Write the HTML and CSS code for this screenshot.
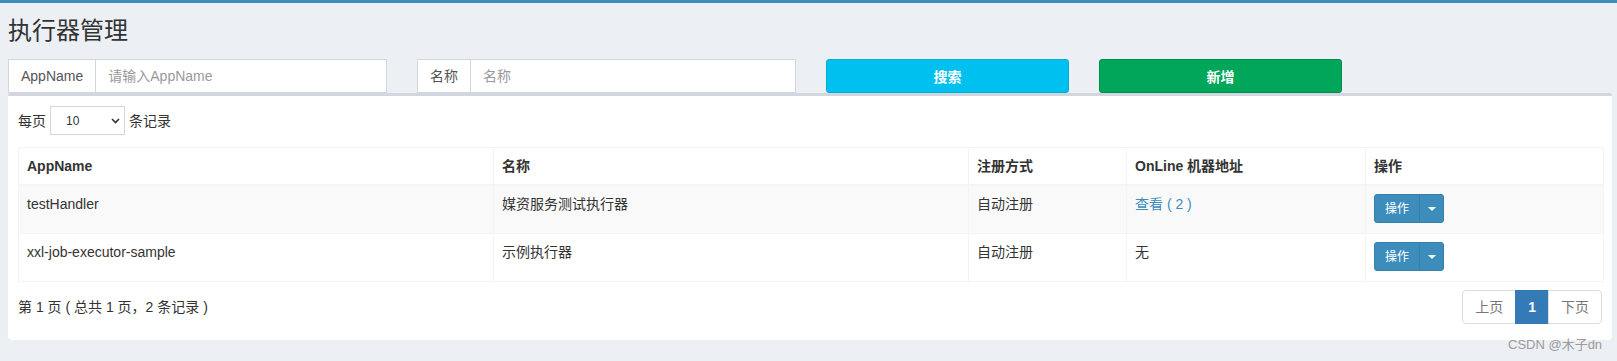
FILE: index.html
```html
<!DOCTYPE html>
<html lang="zh-CN">
<head>
<meta charset="utf-8">
<title>执行器管理</title>
<link rel="stylesheet" href="styles.css">
</head>
<body>
<div class="topbar"></div>
<section class="content">
  <h1 class="page-title">执行器管理</h1>
  <div class="filters">
    <div class="input-group">
      <span class="addon">AppName</span>
      <span class="field">请输入AppName</span>
    </div>
    <div class="input-group">
      <span class="addon">名称</span>
      <span class="field">名称</span>
    </div>
    <button class="btn btn-info">搜索</button>
    <button class="btn btn-success">新增</button>
  </div>
  <div class="box">
    <div class="length">
      <span>每页</span>
      <div class="select"><span>10</span>
        <svg width="9" height="6" viewBox="0 0 9 6"><path d="M1 1 L4.5 4.5 L8 1" fill="none" stroke="#333" stroke-width="1.6"/></svg>
      </div>
      <span>条记录</span>
    </div>
    <table class="table">
      <colgroup>
        <col class="c-app"><col class="c-name"><col class="c-type"><col class="c-online"><col class="c-op">
      </colgroup>
      <thead>
        <tr><th>AppName</th><th>名称</th><th>注册方式</th><th>OnLine 机器地址</th><th>操作</th></tr>
      </thead>
      <tbody>
        <tr>
          <td>testHandler</td><td>媒资服务测试执行器</td><td>自动注册</td>
          <td><a class="link">查看 ( 2 )</a></td>
          <td><div class="btn-group"><span class="op">操作</span><span class="op-toggle"><span class="caret"></span></span></div></td>
        </tr>
        <tr>
          <td>xxl-job-executor-sample</td><td>示例执行器</td><td>自动注册</td>
          <td>无</td>
          <td><div class="btn-group"><span class="op">操作</span><span class="op-toggle"><span class="caret"></span></span></div></td>
        </tr>
      </tbody>
    </table>
    <div class="footer">
      <div class="info">第 1 页 ( 总共 1 页，2 条记录 )</div>
      <ul class="pagination">
        <li class="page">上页</li>
        <li class="page active">1</li>
        <li class="page">下页</li>
      </ul>
    </div>
  </div>
</section>
<div class="watermark">CSDN @木子dn</div>
</body>
</html>
```
FILE: styles.css
```css
* { box-sizing: border-box; }
body {
  margin: 0;
  background: #ecf0f5;
  font-family: "Liberation Sans", Arial, "Noto Sans CJK SC", sans-serif;
  font-size: 14px;
  line-height: 20px;
  color: #333;
}
.topbar { height: 3px; background: #3c8dbc; }
.content { padding: 0 5px 0 8px; }
.page-title {
  margin: 16px 0 0;
  font-size: 24px;
  font-weight: normal;
  line-height: 24px;
  color: #333;
}
.filters {
  display: flex;
  gap: 30px;
  margin-top: 16px;
  height: 34px;
}
.input-group {
  display: flex;
  width: 379px;
  height: 34px;
  border: 1px solid #d2d6de;
  background: #fff;
}
.addon {
  display: flex;
  align-items: center;
  padding: 0 12px;
  border-right: 1px solid #d2d6de;
  color: #555;
}
.field {
  flex: 1;
  display: flex;
  align-items: center;
  padding: 0 12px;
  color: #999;
}
.btn {
  width: 243px;
  height: 34px;
  border: 1px solid;
  border-radius: 3px;
  color: #fff;
  font-family: inherit;
  font-size: 14px;
  font-weight: bold;
  padding: 0;
}
.btn-info { background: #00c0ef; border-color: #00acd6; }
.btn-success { background: #00a65a; border-color: #008d4c; }
.box {
  width: 1604px;
  background: #fff;
  border-top: 3px solid #d2d6de;
  border-radius: 3px;
  box-shadow: 0 1px 1px rgba(0, 0, 0, 0.1);
  padding: 10px 10px 16px;
}
.length {
  display: flex;
  align-items: center;
  gap: 4px;
  height: 29px;
}
.select {
  width: 75px;
  height: 29px;
  border: 1px solid #d2d6de;
  display: flex;
  align-items: center;
  justify-content: space-between;
  padding: 0 4px 0 15px;
  font-size: 12px;
}
.table {
  margin-top: 12px;
  width: 1585px;
  border-collapse: collapse;
  table-layout: fixed;
  border: 1px solid #f4f4f4;
}
.c-app { width: 475px; }
.c-name { width: 475px; }
.c-type { width: 158px; }
.c-online { width: 239px; }
.c-op { width: 238px; }
.table th, .table td {
  padding: 8px;
  border: 1px solid #f4f4f4;
  text-align: left;
  vertical-align: top;
  line-height: 20px;
}
.table tbody td { padding-bottom: 10px; }
.table thead th {
  border-bottom-width: 2px;
  font-weight: bold;
}
.table tbody tr:nth-child(odd) { background: #f9f9f9; }
.link { color: #3c8dbc; }
.btn-group { display: inline-flex; height: 29px; }
.op {
  display: flex;
  align-items: center;
  padding: 0 10px;
  background: #3c8dbc;
  border: 1px solid #367fa9;
  border-radius: 3px 0 0 3px;
  color: #fff;
  font-size: 12px;
}
.op-toggle {
  display: flex;
  align-items: center;
  justify-content: center;
  width: 25px;
  background: #3c8dbc;
  border: 1px solid #367fa9;
  margin-left: -1px;
  border-radius: 0 3px 3px 0;
}
.caret {
  width: 0;
  height: 0;
  border-top: 4px solid #fff;
  border-left: 4px solid transparent;
  border-right: 4px solid transparent;
}
.footer {
  margin-top: 8px;
  display: flex;
  justify-content: space-between;
  align-items: center;
  height: 34px;
}
.pagination {
  display: flex;
  list-style: none;
  margin: 0;
  padding: 0;
}
.page {
  padding: 6px 12px;
  border: 1px solid #ddd;
  margin-left: -1px;
  line-height: 20px;
  color: #777;
  background: #fff;
}
.page:first-child { border-radius: 4px 0 0 4px; margin-left: 0; }
.page:last-child { border-radius: 0 4px 4px 0; }
.page.active {
  background: #337ab7;
  border-color: #337ab7;
  color: #fff;
  font-weight: bold;
}
.watermark {
  position: absolute;
  left: 1508px;
  top: 336px;
  font-size: 13px;
  line-height: 18px;
  color: #9a9a9a;
}
```
